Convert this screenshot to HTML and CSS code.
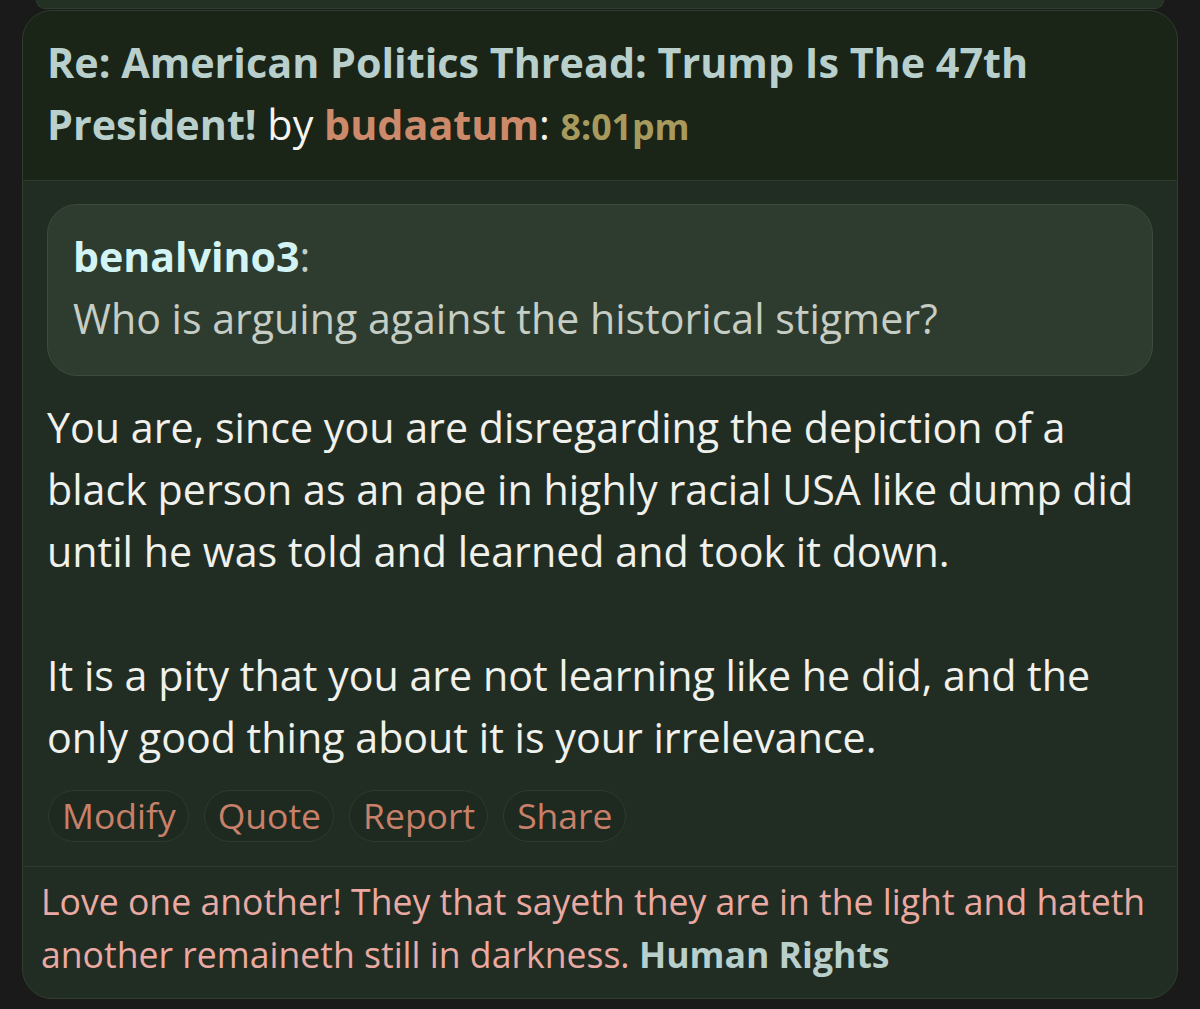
FILE: index.html
```html
<!DOCTYPE html>
<html lang="en">
<head>
    <meta charset="UTF-8">
    <meta name="viewport" content="width=device-width, initial-scale=1.0">
    <title>Re: American Politics Thread: Trump Is The 47th President!</title>
    <link rel="stylesheet" href="styles.css">
</head>
<body>
    <div class="post-prev"></div>

    <div class="post">
        <div class="post-head">
            <span class="subject">Re: American Politics Thread: Trump Is The 47th President!</span>
            by <span class="author">budaatum</span>: <span class="time">8:01pm</span>
        </div>

        <div class="post-body">
            <blockquote class="quote">
                <span class="quote-author">benalvino3</span>:<br>
                Who is arguing against the historical stigmer?
            </blockquote>

            <div class="post-text">
                You are, since you are disregarding the depiction of a black person as an ape in highly racial USA like dump did until he was told and learned and took it down.<br><br>It is a pity that you are not learning like he did, and the only good thing about it is your irrelevance.
            </div>

            <div class="post-actions">
                <a class="action">Modify</a>
                <a class="action">Quote</a>
                <a class="action">Report</a>
                <a class="action">Share</a>
            </div>
        </div>

        <div class="post-sig">
            Love one another! They that sayeth they are in the light and hateth another remaineth still in darkness. <b>Human Rights</b>
        </div>
    </div>
</body>
</html>
```

FILE: styles.css
```css
body {
    margin: 0;
    background: #1b1a1a;
    font-family: 'Open Sans', 'Noto Sans', sans-serif;
    color: #f0f0ec;
}

.post-prev {
    height: 8px;
    margin: 0 36px;
    background: #233024;
    border: 1px solid #2f3e30;
    border-top: none;
    border-radius: 0 0 30px 30px;
}

.post {
    margin: 1px 22px 12px;
    border: 1px solid #2f3e2f;
    border-radius: 30px;
    overflow: hidden;
    background: #212d22;
}

.post-head {
    background: #1a2518;
    padding: 20px 24px 23px;
    border-bottom: 1px solid #2c3a2d;
    font-size: 41.3px;
    line-height: 62px;
    color: #f4f4f0;
}
.subject {
    font-weight: bold;
    color: #b8cfcc;
}
.author {
    font-weight: bold;
    color: #cc8a6b;
}
.time {
    font-weight: bold;
    font-size: 35.7px;
    color: #a89a5c;
}

.post-body {
    padding: 23px 24px 0;
}

.quote {
    margin: 0;
    padding: 20px 25px 26px;
    background: #2e3c2f;
    border: 1px solid #3b4b3c;
    border-radius: 30px;
    font-size: 41.1px;
    line-height: 62px;
    color: #c6cdc5;
}
.quote-author {
    font-weight: bold;
    color: #d2f4f4;
}

.post-text {
    padding-top: 20px;
    font-size: 41.2px;
    line-height: 62px;
}

.post-actions {
    display: flex;
    gap: 15px;
    padding: 22px 0 24px 1px;
}
.action {
    padding: 2px 12px 3px 13px;
    font-size: 35.5px;
    line-height: 45px;
    color: #c9806a;
    border: 1px solid #2e3a2e;
    border-radius: 26px;
    background: #1e2a1f;
}

.post-sig {
    padding: 8px 18px 17px;
    border-top: 1px solid #2c3a2d;
    font-size: 35.6px;
    line-height: 53px;
    color: #eaa9a2;
}
.post-sig b {
    color: #b8cfcc;
}
```
